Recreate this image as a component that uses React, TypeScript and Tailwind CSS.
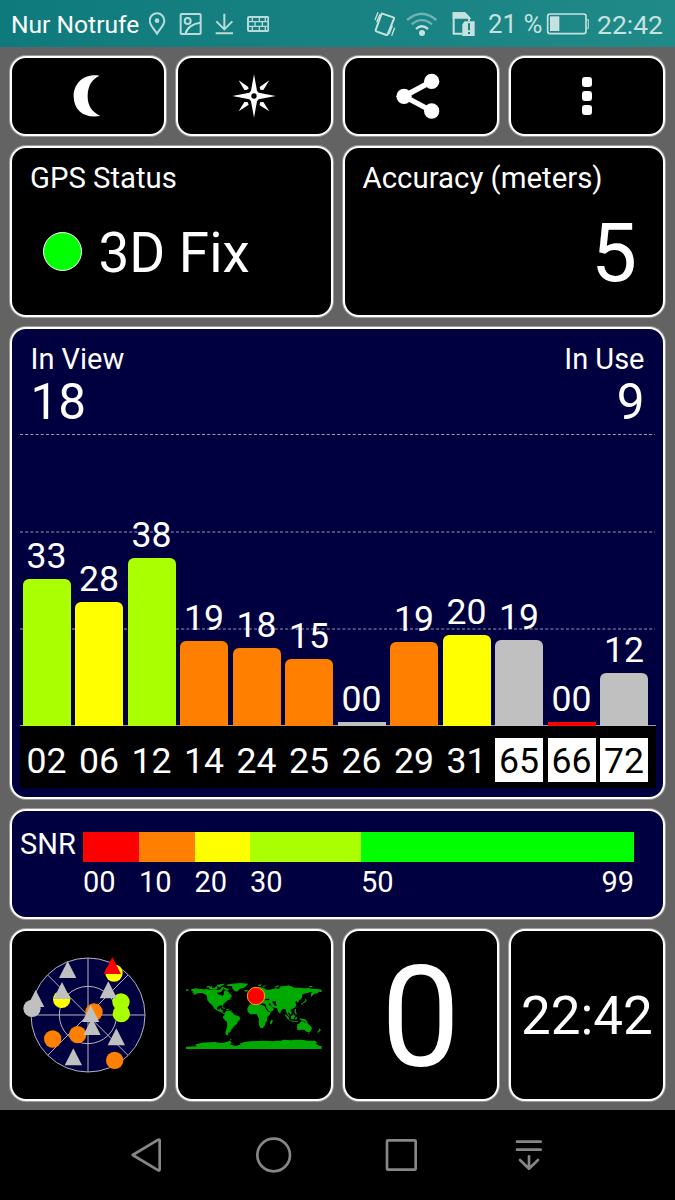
import { ReactNode } from "react";

type Sat = { id: string; snr: string; height: number; color: string; glonass?: boolean };

const satellites: Sat[] = [
  { id: "02", snr: "33", height: 147, color: "bg-[#aaff00]" },
  { id: "06", snr: "28", height: 124.5, color: "bg-[#ffff00]" },
  { id: "12", snr: "38", height: 168, color: "bg-[#aaff00]" },
  { id: "14", snr: "19", height: 85.5, color: "bg-[#ff8000]" },
  { id: "24", snr: "18", height: 78, color: "bg-[#ff8000]" },
  { id: "25", snr: "15", height: 67.5, color: "bg-[#ff8000]" },
  { id: "26", snr: "00", height: 4.5, color: "bg-[#c0c0c0]" },
  { id: "29", snr: "19", height: 84.5, color: "bg-[#ff8000]" },
  { id: "31", snr: "20", height: 91, color: "bg-[#ffff00]" },
  { id: "65", snr: "19", height: 86, color: "bg-[#c0c0c0]", glonass: true },
  { id: "66", snr: "00", height: 4.5, color: "bg-[#ff0000]", glonass: true },
  { id: "72", snr: "12", height: 53.5, color: "bg-[#c0c0c0]", glonass: true },
];

const scale = [
  { label: "00", width: "w-[56px]", color: "bg-[#ff0000]" },
  { label: "10", width: "w-[55.5px]", color: "bg-[#ff8000]" },
  { label: "20", width: "w-[55.5px]", color: "bg-[#ffff00]" },
  { label: "30", width: "w-[111px]", color: "bg-[#aaff00]" },
  { label: "50", width: "w-[273px]", color: "bg-[#00ff00]" },
];

const Card = ({ className = "", children }: { className?: string; children: ReactNode }) => (
  <div
    className={`rounded-[16px] border-2 border-white shadow-[0_0_0_1px_#9c9c9c] ${
      className.includes("bg-") ? "" : "bg-black"
    } ${className}`}
  >
    {children}
  </div>
);

const StatusBar = () => (
  <header className="flex h-[47px] items-center bg-linear-to-r from-[#0f7a7c] to-[#1f8a88] pt-[3px] pl-[11px] text-white">
    <span className="w-[138px] text-[24.6px] leading-none whitespace-nowrap">Nur Notrufe</span>
    <svg className="-mt-[3px] h-[24px] w-[120px] text-[#b9dcdb]" viewBox="447 34 360 72" fill="none" stroke="currentColor" strokeWidth="6">
      <path d="M471 99C462 84 449 74 449 60a22 22 0 0 1 44 0C493 74 480 84 471 99Z" />
      <circle cx="471" cy="60" r="7" fill="currentColor" stroke="none" />
      <rect x="542" y="40" width="60" height="60" rx="3" />
      <circle cx="563" cy="61" r="9" />
      <path d="M556 100C560 82 578 68 602 66" />
      <path d="M673 39V85M649 62L673 86L697 62M647 98H699" />
      <rect x="744" y="49" width="61" height="42" rx="3" />
      <path d="M744 63H805M744 77H805M757 49V63M778 49V63M796 49V63M765 63V77M787 63V77M757 77V91M778 77V91M796 77V91" strokeWidth="4" />
    </svg>
    <svg className="-mt-[3px] ml-[105px] h-[26px] w-[102px] text-[#c5e2e1]" viewBox="117 30 306 78" fill="none" stroke="currentColor" strokeWidth="6">
      <path d="M142 38L175 49Q178 50 177 53L158 100Q157 103 154 102L124 91Q121 90 122 87L139 40Q140 37 142 38Z" />
      <path d="M120 57L129 34M125 64L135 40M172 74L162 99M179 80L170 104" strokeWidth="4" />
      <path d="M216 57Q260 19 304 57M230 70Q260 45 291 70" stroke="#6db4b2" strokeWidth="7" />
      <path d="M243 84Q260 68 279 84" strokeWidth="7" />
      <circle cx="261" cy="96" r="9" fill="currentColor" stroke="none" />
      <path d="M383 98H356V37H389L402 50V60" />
      <path d="M356 37H389L402 50H356Z" fill="currentColor" />
      <path d="M389 61H419V105H382V70Z" fill="currentColor" stroke="none" />
      <path d="M402 67V88M402 93V99" stroke="#1b8583" strokeWidth="6" />
    </svg>
    <span className="ml-[12px] w-[85px] text-[25.8px] leading-none whitespace-nowrap text-[#c5e2e1]">21 %</span>
    <svg className="-mt-[3px] -ml-[26px] h-[22px] w-[42px] overflow-visible text-[#c5e2e1]" viewBox="636 40 126 66" fill="none" stroke="currentColor" strokeWidth="5">
      <rect x="638" y="43" width="115" height="59" rx="7" />
      <path d="M755 60H760V86H755" strokeWidth="3" />
      <rect x="645" y="50" width="28" height="44" fill="currentColor" stroke="none" />
    </svg>
    <span className="ml-[8px] text-[26.5px] leading-none text-[#c5e2e1]">22:42</span>
  </header>
);

const Toolbar = () => (
  <div className="grid h-[80px] grid-cols-4 gap-[10px]">
    <Card className="flex items-center justify-center">
      <svg className="mr-[3px] h-[42px] w-[28px]" viewBox="218 226 84 126" fill="#fff">
        <path d="M297 228C245 221 219 257 220 291C221 331 250 357 300 349C272 335 261 315 262 286C263 258 275 239 297 228Z" />
      </svg>
    </Card>
    <Card className="flex items-center justify-center">
      <svg className="h-[44px] w-[44px]" viewBox="695 223 132 132" fill="#fff">
        <path d="M761 224L770 273L775 279L826 289L775 299L770 305L761 354L752 305L747 299L696 289L747 279L752 273Z" />
        <path d="M715 242L743 261L745 267L738 271L732 271Z" />
        <path d="M807 242L789 271L780 270L778 262Z" />
        <path d="M715 335L732 307L742 307L745 315Z" />
        <path d="M807 335L778 317L779 308L789 307Z" />
        <circle cx="761" cy="289" r="8" fill="#000" />
      </svg>
    </Card>
    <Card className="flex items-center justify-center">
      <svg className="-ml-[6px] h-[46px] w-[44px]" viewBox="182 219 132 138" fill="#fff">
        <path d="M289 244L206 289L289 333" fill="none" stroke="#fff" strokeWidth="16" />
        <circle cx="289" cy="244" r="23" />
        <circle cx="206" cy="289" r="23" />
        <circle cx="289" cy="333" r="23" />
      </svg>
    </Card>
    <Card className="flex flex-col items-center justify-center gap-[4px]">
      <i className="size-[10px] rounded-[3px] bg-white" />
      <i className="size-[10px] rounded-[3px] bg-white" />
      <i className="size-[10px] rounded-[3px] bg-white" />
    </Card>
  </div>
);

const Chart = () => (
  <Card className="h-[472px] bg-[#000040] px-[7.5px] leading-none">
    <div className="flex h-[104px] justify-between pt-[16px] pr-[11px] pl-[11px]">
      <div>
        <div className="text-[29px]">In View</div>
        <div className="mt-[4px] text-[49.5px]">18</div>
      </div>
      <div className="text-right">
        <div className="text-[29px]">In Use</div>
        <div className="mt-[4px] text-[49.5px]">9</div>
      </div>
    </div>
    <div className="relative h-[293px]">
      <svg className="absolute inset-0 h-[293px] w-[636px]" viewBox="0 0 636 293" stroke="#9a9ab8" strokeWidth="1">
        <path d="M0 1.5H635M0 99H635M0 196H635" strokeDasharray="3 2.2" />
        <path d="M0 292.5H636" />
      </svg>
      <div className="relative flex h-full items-end gap-[4.5px] pl-[3px]">
        {satellites.map((s) => (
          <div key={s.id} className="flex w-[48px] shrink-0 flex-col items-center">
            <span className="mb-[5px] text-[35.6px] leading-[36px]">{s.snr}</span>
            <div
              className={`w-full ${s.height > 10 ? "rounded-t-[6px]" : ""} ${s.color}`}
              style={{ height: s.height }}
            />
          </div>
        ))}
      </div>
    </div>
    <div className="flex h-[62px] gap-[4.5px] bg-black pt-[12px] pl-[3px]">
      {satellites.map((s) => (
        <span
          key={s.id}
          className={`flex h-[44px] w-[48px] shrink-0 items-center justify-center pt-[3px] text-[35.6px] ${
            s.glonass ? "bg-white text-black" : ""
          }`}
        >
          {s.id}
        </span>
      ))}
    </div>
  </Card>
);

const SnrScale = () => (
  <Card className="flex h-[110px] bg-[#000040] pt-[21px] pl-[8px] text-[29px] leading-none">
    <span className="w-[63px] -mt-[2px]">SNR</span>
    <div className="flex">
      {scale.map((s) => (
        <div key={s.label} className={s.width}>
          <div className={`h-[30px] ${s.color}`} />
          <div className="mt-[6px] flex justify-between">
            <span>{s.label}</span>
            {s.label === "50" && <span>99</span>}
          </div>
        </div>
      ))}
    </div>
  </Card>
);

const SkyView = () => {
  const tri = (x: number, y: number) => `M${x} ${y}L${x + 26} ${y + 51}H${x - 26}Z`;
  return (
    <svg className="h-[120px] w-[120px] overflow-visible" viewBox="83 89 360 360">
      <g fill="none" stroke="#b4b4bc" strokeWidth="3">
        <circle cx="263" cy="269" r="171" fill="#000040" />
        <circle cx="263" cy="269" r="86" />
        <path d="M263 98V440M92 269H434M142 149L383 390M383 149L142 390" />
      </g>
      <g fill="#ff8000">
        <circle cx="281" cy="260" r="26" />
        <circle cx="232" cy="328" r="26" />
        <circle cx="157" cy="341" r="26" />
        <circle cx="343" cy="405" r="26" />
      </g>
      <g fill="#ffff00">
        <circle cx="341" cy="143" r="26" />
        <circle cx="184" cy="222" r="26" />
      </g>
      <g fill="#aaff00">
        <circle cx="362" cy="230" r="26" />
        <circle cx="363" cy="265" r="26" />
      </g>
      <path d={tri(336, 95)} fill="#ff0000" />
      <g fill="#c0c0c0">
        <path d={tri(202, 107)} />
        <path d={tri(185, 170)} />
        <path d={tri(106, 194)} />
        <path d={tri(324, 168)} />
        <path d={tri(271, 239)} />
        <path d={tri(275, 278)} />
        <path d={tri(348, 309)} />
        <path d={tri(219, 369)} />
        <circle cx="95" cy="249" r="26" />
      </g>
    </svg>
  );
};

const WorldMap = () => (
  <svg className="mt-[2px] h-[76px] w-[144px] shrink-0" viewBox="0 0 432 228" fill="#00aa00">
    {/* North and Central America */}
    <path d="M12 34H19V38H12ZM28 34L40 31L54 33L67 34L76 33L84 35L98 34L108 37L116 34L119 27L124 28L122 35L118 41L113 44L115 50L122 53L126 49L125 42L130 37L139 41L142 46L148 51L150 55L144 60L148 64L140 65L134 69L129 74L124 79L122 86L119 82L112 83L106 87L105 93L112 95L116 90L118 96L122 97L122 103L129 106L126 108L117 103L108 99L98 93L94 86L89 80L82 74L76 67L75 55L69 49L60 45L49 45L42 49L32 51L37 46L31 44L34 40L28 38Z" />
    <path d="M82 26L91 24L89 29L98 30L103 24L108 30L101 35L91 33L81 33ZM74 25L84 24L82 28L74 29ZM104 21L118 18L130 17L119 23L113 28L107 26ZM121 26L132 30L141 34L137 39L130 35L123 31ZM119 87L131 90L127 92L119 89ZM133 93L143 94L137 97L132 95ZM146 97H149V99H146Z" />
    {/* Greenland and Iceland */}
    <path d="M133 20L150 17L175 15L199 17L193 24L186 29L174 32L165 41L157 38L151 31L150 24L138 25ZM187 36L198 36L196 41L188 40Z" />
    {/* South America */}
    <path d="M128 104L133 98L144 98L153 104L156 110L169 114L175 119L173 125L168 130L165 138L157 143L153 150L147 156L145 162L138 166L138 172L132 171L130 164L133 154L136 142L135 132L128 126L122 118L127 111Z" />
    {/* Europe, Asia */}
    <path d="M200 58L207 47L216 38L225 30L237 27L249 32L255 36L269 34L281 31L291 33L296 25L309 24L326 24L337 29L350 29L366 31L381 30L393 33L407 33L419 35V42L409 41L407 46L397 47L391 53L388 57L386 49L391 43L383 43L374 46L365 47L360 51L361 57L357 63L351 67L348 75L344 69L340 72L343 80L340 88L332 92L325 95L329 103L327 110L322 105L319 101L320 110L325 116L320 115L314 105L311 94L305 92L297 98L295 107L289 102L285 91L277 89L270 86L265 84L274 91L276 95L266 102L260 99L253 88L250 78L242 76L235 79L224 76L213 77L203 76V69L209 68L208 62Z" />
    <path d="M242 23L254 22L247 26L239 25ZM229 20L238 19L237 24L229 24ZM277 27L288 22L292 24L280 29ZM313 21L323 20L321 23ZM381 24L393 25L389 28L381 27ZM371 59L374 67L371 72L364 76L358 80L357 77L365 72L370 68Z" />
    {/* Africa */}
    <path d="M202 80L217 76L228 77L236 80L247 83L252 93L258 101L266 103L263 110L255 118L256 129L250 134L249 141L244 149L236 151L232 144L230 132L231 123L227 114L224 108L214 109L205 109L197 101L196 91ZM269 125L273 128L268 139L264 138L265 130Z" />
    {/* South-east Asia and Oceania */}
    <path d="M310 108L320 118L323 127L317 123L309 111ZM327 115L335 109L339 115L336 124L327 122ZM323 127L337 129L348 130V132L334 131L323 129ZM341 117L346 118L342 126L339 123ZM338 93H342V103L345 108L341 110L338 101ZM352 119L359 122L369 124L377 131L372 132L366 129L356 127ZM346 139L353 136L358 130L365 130L369 135L374 129L378 137L385 143L390 149L388 156L382 163L373 161L368 156L359 155L347 157L345 148ZM378 165L383 166L380 169ZM411 151L417 156L412 161L407 164L405 162L411 157Z" />
    {/* Antarctica */}
    <path d="M12 206L45 205L39 200L49 197L60 194L82 193L99 192L115 195L124 195L132 192L141 190L145 184L150 183L143 188L149 193L144 199L151 202L161 203L176 200L172 197L188 192L204 190L224 189L252 188L272 190L283 188L296 188L306 185L326 187L341 185L360 185L376 188L398 188L405 192L402 197L408 202L419 205V213H12Z" />
    <path d="M270 71L281 69L284 84L278 83ZM259 77L264 76L268 82L263 83ZM104 44L114 43L119 49L115 52L107 48ZM249 63L260 62L264 66L250 67Z" fill="#000" />
    <circle cx="222" cy="54" r="26" fill="#ff0000" stroke="#ffa000" strokeWidth="3" />
  </svg>
);

const NavBar = () => (
  <nav className="h-[90px] bg-black">
    <svg className="h-[90px] w-[675px]" viewBox="-300 15 2025 270" fill="none" stroke="#868686" strokeWidth="8" strokeLinecap="round" strokeLinejoin="round">
      <path d="M98 150L175 104Q179 102 179 107V193Q179 198 175 196Z" />
      <circle cx="521" cy="150" r="49" />
      <rect x="861" y="106" width="86" height="88" rx="3" />
      <path d="M1251 110H1322M1251 134H1322M1287 154V190M1260 165L1287 191L1314 165" />
    </svg>
  </nav>
);

export default function App() {
  return (
    <div className="flex h-[1200px] w-[675px] flex-col overflow-hidden bg-[#636363] font-[Roboto,sans-serif] text-white">
      <StatusBar />
      <main className="flex h-[1063px] flex-col gap-[10px] px-[10px] pt-[9px]">
        <Toolbar />
        <div className="grid h-[171px] grid-cols-2 gap-[10px]">
          <Card className="pt-[16px] pl-[18px] leading-none">
            <div className="text-[29.3px]">GPS Status</div>
            <div className="mt-[33px] flex items-start">
              <i className="mt-[6px] ml-[12.5px] size-[39px] rounded-full border border-white bg-[#00ff00]" />
              <span className="ml-[17px] text-[54.8px]">3D Fix</span>
            </div>
          </Card>
          <Card className="pt-[16px] pl-[18px] leading-none">
            <div className="text-[29.4px]">Accuracy (meters)</div>
            <div className="mt-[19px] mr-[26px] text-right text-[82px]">5</div>
          </Card>
        </div>
        <Chart />
        <SnrScale />
        <div className="grid h-[172px] grid-cols-4 gap-[10px]">
          <Card className="flex items-center justify-center">
            <SkyView />
          </Card>
          <Card className="flex items-center justify-center">
            <WorldMap />
          </Card>
          <Card className="flex items-center justify-center pt-[5px] text-[141px] leading-none">0</Card>
          <Card className="flex items-center justify-center pt-[2px] text-[53px] leading-none">22:42</Card>
        </div>
      </main>
      <NavBar />
    </div>
  );
}
